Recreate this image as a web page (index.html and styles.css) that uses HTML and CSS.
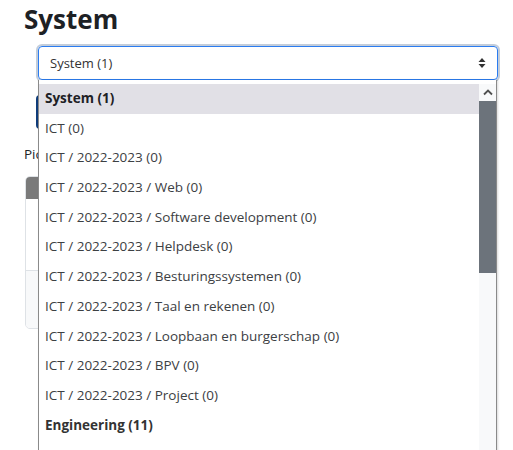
FILE: index.html
```html
<!DOCTYPE html>
<html>
<head>
<meta charset="utf-8">
<link rel="stylesheet" href="styles.css">
</head>
<body>
<div class="page">
  <h1 class="title">System</h1>
  <div class="select-wrap">
    <div class="select">
      <span class="select-value">System (1)</span>
      <svg class="select-arrows" width="8" height="12" viewBox="0 0 8 12"><path d="M0.5 5 L4 1 L7.5 5 Z M0.5 7 L4 11 L7.5 7 Z" fill="#333"/></svg>
    </div>
  </div>
  <div class="btn-row"><span class="btn-primary"></span></div>
  <p class="hint">Pic</p>
  <div class="card">
    <div class="card-head"></div>
    <div class="card-body"></div>
    <div class="card-foot"></div>
  </div>
</div>
<div class="popup">
  <div class="items">
    <div class="item item-selected">System (1)</div>
    <div class="item">ICT (0)</div>
    <div class="item">ICT / 2022-2023 (0)</div>
    <div class="item">ICT / 2022-2023 / Web (0)</div>
    <div class="item">ICT / 2022-2023 / Software development (0)</div>
    <div class="item">ICT / 2022-2023 / Helpdesk (0)</div>
    <div class="item">ICT / 2022-2023 / Besturingssystemen (0)</div>
    <div class="item">ICT / 2022-2023 / Taal en rekenen (0)</div>
    <div class="item">ICT / 2022-2023 / Loopbaan en burgerschap (0)</div>
    <div class="item">ICT / 2022-2023 / BPV (0)</div>
    <div class="item">ICT / 2022-2023 / Project (0)</div>
    <div class="item item-bold">Engineering (11)</div>
  </div>
  <div class="scrollbar">
    <div class="sb-up"><svg width="10" height="7" viewBox="0 0 10 7"><path d="M1 5.5 L5 1.5 L9 5.5" fill="none" stroke="#505050" stroke-width="1.8"/></svg></div>
    <div class="sb-thumb"></div>
    <div class="sb-track"></div>
  </div>
</div>
</body>
</html>
```
FILE: styles.css
```css
html, body {
  margin: 0;
  padding: 0;
  background: #fff;
  overflow: hidden;
}
body {
  width: 513px;
  height: 450px;
  position: relative;
  font-family: "Open Sans", "Noto Sans", sans-serif;
  color: #212529;
}
.page {
  padding: 0 16px 0 24px;
}
.title {
  margin: 0;
  padding-top: 2px;
  font-size: 26px;
  line-height: 34px;
  font-weight: 700;
  color: #1d2125;
}
.select-wrap {
  padding: 10px 0 0 14px;
}
.select {
  box-sizing: border-box;
  width: 460px;
  height: 34px;
  border: 1px solid #2b7cf0;
  border-radius: 4px;
  box-shadow: 0 0 0 2px #c3cdda;
  display: flex;
  align-items: center;
  padding: 0 11px;
  justify-content: space-between;
}
.select-value {
  font-size: 13px;
  color: #333;
}
.select-arrows {
  display: block;
}
.btn-row {
  padding-top: 15px;
  padding-left: 12px;
}
.btn-primary {
  display: block;
  width: 60px;
  height: 34px;
  background: #0f3c7a;
  border-radius: 4px;
}
.hint {
  margin: 16px 0 0 0;
  font-size: 13.5px;
  line-height: 18px;
}
.card {
  margin: 13px 0 0 1px;
  width: 470px;
  height: 153px;
  border: 1px solid #dee2e6;
  border-radius: 5px;
  overflow: hidden;
  box-sizing: border-box;
  display: flex;
  flex-direction: column;
}
.card-head {
  height: 22px;
  background: #7a7a7a;
}
.card-body {
  flex: 1;
  border-bottom: 1px solid #dee2e6;
}
.card-foot {
  height: 57px;
  background: #f8f9fa;
}
.popup {
  position: absolute;
  left: 38px;
  top: 80px;
  width: 459px;
  height: 380px;
  box-sizing: border-box;
  background: #fff;
  border-left: 1px solid #8a8a8a;
  border-right: 1px solid #8a8a8a;
  box-shadow: 1px 0 2px rgba(0,0,0,0.15);
  padding-top: 4px;
  display: flex;
}
.items {
  flex: 1;
  overflow: hidden;
}
.item {
  height: 29.7px;
  line-height: 29.7px;
  padding-left: 6px;
  font-size: 13.5px;
  color: #3c4043;
  white-space: nowrap;
}
.item-selected {
  background: #e1e0e6;
  font-weight: 700;
  color: #1d2125;
}
.item-bold {
  font-weight: 700;
  color: #333;
}
.scrollbar {
  width: 17px;
  display: flex;
  flex-direction: column;
}
.sb-up {
  height: 17px;
  background: #f8f9fa;
  display: flex;
  align-items: center;
  justify-content: center;
}
.sb-thumb {
  height: 172px;
  background: #6c737b;
}
.sb-track {
  flex: 1;
  background: #f8f9fa;
}
```
